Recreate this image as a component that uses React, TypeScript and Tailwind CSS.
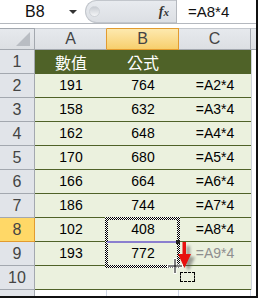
import React from "react";

const data: [string, string, string, string][] = [
  ["2", "191", "764", "=A2*4"],
  ["3", "158", "632", "=A3*4"],
  ["4", "162", "648", "=A4*4"],
  ["5", "170", "680", "=A5*4"],
  ["6", "166", "664", "=A6*4"],
  ["7", "186", "744", "=A7*4"],
  ["8", "102", "408", "=A8*4"],
  ["9", "193", "772", "=A9*4"],
];

const font = { fontFamily: '"Liberation Sans", Arial, sans-serif' };

function RowHeader({ n, active }: { n: string; active?: boolean }) {
  return (
    <div
      className={
        active
          ? "w-[35px] h-full flex items-center justify-center border-r border-b border-[#e29b2f] bg-[#ffd867] text-[16px] text-[#444]"
          : "w-[35px] h-full flex items-center justify-center border-r border-b border-[#a3a8af] bg-[#e1e4e9] text-[16px] text-[#444]"
      }
    >
      {n}
    </div>
  );
}

export default function App() {
  return (
    <div
      className="relative w-[258px] h-[298px] bg-white overflow-hidden border-r-2 border-b-2 border-[#111]"
      style={font}
    >
      {/* Formula bar */}
      <div className="flex h-[24px] border-b border-[#b4b8be]">
        <div className="w-[85px] h-full bg-white flex items-center">
          <span className="pl-[25px] text-[16px] text-[#111] leading-none">B8</span>
          <span className="ml-auto mr-[8px] w-0 h-0 border-l-[4px] border-r-[4px] border-t-[4px] border-l-transparent border-r-transparent border-t-[#333]" />
        </div>
        <div className="w-[91px] h-full relative bg-gradient-to-b from-[#e8ebef] to-[#dcdfe4] rounded-l-[12px] border-l border-t border-b border-[#c2c6cc] flex items-center">
          <span className="ml-[3px] w-[11px] h-[11px] rounded-full bg-gradient-to-b from-[#c9cdd3] to-[#f4f5f7] border border-[#cfd3d8]" />
          <span
            className="ml-auto mr-[7px] text-[14px] italic font-bold text-[#333]"
            style={{ fontFamily: '"Liberation Serif", "Times New Roman", serif' }}
          >
            f<span className="text-[11px]">x</span>
          </span>
        </div>
        <div className="flex-1 h-full bg-white border-l border-[#b4b8be] pl-[11px] flex items-center">
          <span className="text-[15px] text-[#111] leading-none">=A8*4</span>
        </div>
      </div>
      <div className="h-[4px] bg-white" />

      {/* Column headers */}
      <div className="flex h-[22px]">
        <div className="relative w-[35px] h-full bg-gradient-to-b from-[#e6e9ed] to-[#dcdfe3] border-r border-b border-t border-[#a3a8af]">
          <svg className="absolute left-0 top-0" width="35" height="22">
            <polygon points="16,17 30,17 30,3" fill="#b9bdc3" />
          </svg>
        </div>
        <div className="w-[72px] h-full flex items-center justify-center bg-gradient-to-b from-[#e6e9ed] to-[#dcdfe3] border-t border-b border-r border-t-[#c4c8ce] border-b-[#a3a8af] border-r-[#e29b2f] text-[16px] text-[#444]">
          A
        </div>
        <div className="w-[72px] h-full flex items-center justify-center bg-gradient-to-b from-[#fde9ae] to-[#f7cf6c] border-t border-b border-r border-t-[#e29b2f] border-b-[#e29b2f] border-r-[#e29b2f] text-[16px] text-[#444]">
          B
        </div>
        <div className="w-[72px] h-full flex items-center justify-center bg-gradient-to-b from-[#e6e9ed] to-[#dcdfe3] border-t border-b border-r border-t-[#c4c8ce] border-b-[#a3a8af] border-r-[#a3a8af] text-[16px] text-[#444]">
          C
        </div>
        <div className="flex-1 h-full bg-gradient-to-b from-[#e6e9ed] to-[#dcdfe3] border-t border-b border-t-[#c4c8ce] border-b-[#a3a8af]" />
      </div>

      {/* Row 1 header */}
      <div className="flex h-[24px]">
        <RowHeader n="1" />
        <div
          className="w-[216px] h-full bg-[#4f6228] flex text-white text-[16px]"
          style={{ fontFamily: '"Noto Sans CJK TC", "Noto Sans CJK SC", sans-serif' }}
        >
          <div className="w-[72px] flex items-center justify-center">數值</div>
          <div className="w-[72px] flex items-center justify-center">公式</div>
          <div className="w-[72px]" />
        </div>
        <div className="flex-1 h-full bg-white border-l border-[#d0d4da]" />
      </div>

      {data.map(([n, a, b, c]) => (
        <div key={n} className="flex h-[24px]">
          <RowHeader n={n} active={n === "8"} />
          <div className="w-[216px] h-full bg-[#ebf1de] border-b border-[#4f6228] flex text-[14px] text-black">
            <div className="w-[72px] flex items-center justify-center">{a}</div>
            <div className="w-[72px] flex items-center justify-center">{b}</div>
            <div
              className={
                n === "9"
                  ? "w-[72px] flex items-center justify-center text-[#8e8e8e]"
                  : "w-[72px] flex items-center justify-center"
              }
            >
              {c}
            </div>
          </div>
          <div className="flex-1 h-full bg-white border-l border-[#d0d4da]" />
        </div>
      ))}

      {/* Row 10 */}
      <div className="flex h-[24px]">
        <RowHeader n="10" />
        <div className="w-[216px] h-full bg-[#ebf1de] border-b border-[#4f6228]" />
        <div className="flex-1 h-full bg-white border-l border-[#d0d4da]" />
      </div>

      {/* Row 11 (partial) */}
      <div className="flex h-[6px]">
        <div className="w-[35px] h-full border-r border-[#a3a8af] bg-[#e1e4e9]" />
        <div className="w-[72px] h-full border-r border-[#d0d7e5]" />
        <div className="w-[72px] h-full border-r border-[#d0d7e5]" />
        <div className="w-[72px] h-full border-r border-[#d0d7e5]" />
        <div className="flex-1" />
      </div>

      {/* Selection marquee B8:B9 */}
      <div className="absolute left-[105px] top-[217px] w-[75px] h-[3px] bg-[repeating-conic-gradient(#000_0%_25%,#fff_0%_50%)] bg-[length:2px_2px]" />
      <div className="absolute left-[105px] top-[265px] w-[75px] h-[3px] bg-[repeating-conic-gradient(#000_0%_25%,#fff_0%_50%)] bg-[length:2px_2px]" />
      <div className="absolute left-[105px] top-[217px] w-[3px] h-[51px] bg-[repeating-conic-gradient(#000_0%_25%,#fff_0%_50%)] bg-[length:2px_2px]" />
      <div className="absolute left-[177px] top-[217px] w-[3px] h-[51px] bg-[repeating-conic-gradient(#000_0%_25%,#fff_0%_50%)] bg-[length:2px_2px]" />

      {/* purple line between B8 and B9 */}
      <div className="absolute left-[107px] top-[241px] w-[69px] h-[2px] bg-[#8a7fcf]" />
      <div className="absolute left-[176px] top-[240px] w-[4px] h-[4px] bg-[#222]" />

      {/* Red arrow */}
      <svg className="absolute left-[174px] top-[240px]" width="28" height="34">
        <defs>
          <filter id="sh" x="-50%" y="-50%" width="200%" height="200%">
            <feGaussianBlur stdDeviation="1.6" />
          </filter>
        </defs>
        <polygon
          points="12.5,6 16,6 16,17 21,17 14.5,31 8,17 12.5,17"
          fill="#555"
          opacity="0.55"
          filter="url(#sh)"
        />
        <polygon points="8.5,2 12,2 12,14 17,14 10.5,28 4,14 8.5,14" fill="#e8100f" />
      </svg>

      {/* Cross cursor */}
      <svg className="absolute left-[166px] top-[257px]" width="18" height="18">
        <line x1="9" y1="1" x2="9" y2="17" stroke="#fff" strokeWidth="3" />
        <line x1="1" y1="9" x2="17" y2="9" stroke="#fff" strokeWidth="3" />
        <line x1="9" y1="2" x2="9" y2="16" stroke="#000" strokeWidth="1" />
        <line x1="2" y1="9" x2="16" y2="9" stroke="#000" strokeWidth="1" />
      </svg>

      {/* small dashed rect */}
      <div className="absolute left-[180px] top-[272px] w-[15px] h-[10px] border border-dashed border-black" />
    </div>
  );
}
